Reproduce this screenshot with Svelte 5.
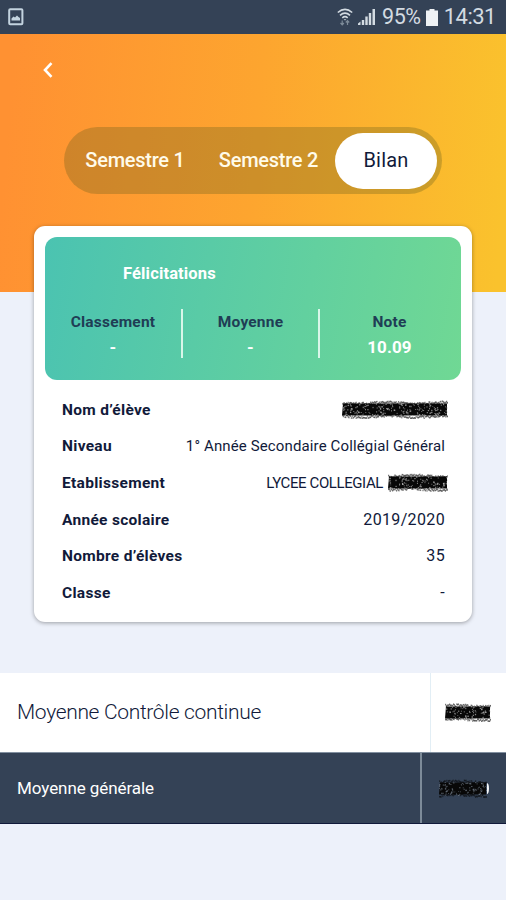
<script lang="ts">
  type Speck = { x: number; y: number; w: number; h: number; kind: string };

  interface Row {
    label: string;
    value: string;
    size: string;
    hidden?: number;
  }

  const tabs = ["Semestre 1", "Semestre 2", "Bilan"];
  let active = $state("Bilan");

  const stats = [
    { label: "Classement", value: "-" },
    { label: "Moyenne", value: "-" },
    { label: "Note", value: "10.09" },
  ];

  const rows: Row[] = [
    { label: "Nom d’élève", value: "", size: "", hidden: 106 },
    { label: "Niveau", value: "1° Année Secondaire Collégial Général", size: "long" },
    { label: "Etablissement", value: "LYCEE COLLEGIAL", size: "caps", hidden: 60 },
    { label: "Année scolaire", value: "2019/2020", size: "num" },
    { label: "Nombre d’élèves", value: "35", size: "num" },
    { label: "Classe", value: "-", size: "num" },
  ];

  // marker strokes: dark grain along the edges, light grain inside
  function grain(width: number, seed: number): Speck[] {
    let s = seed * 7919;
    const rnd = () => {
      s = (s * 16807) % 2147483647;
      return s / 2147483647;
    };
    const specks: Speck[] = [];
    for (let x = 0; x < width; x += 0.8) {
      const wave = Math.sin(x / 9 + seed) * 0.8;
      specks.push({ x, y: 1 + wave + rnd() * 2.5, w: 1.2, h: 1.6, kind: "edge" });
      specks.push({ x, y: 14.5 + wave + rnd() * 2.5, w: 1.2, h: 1.6, kind: "edge" });
    }
    for (let i = 0; i < width * 1.8; i++) {
      specks.push({
        x: rnd() * width,
        y: 3 + rnd() * 13,
        w: 0.7 + rnd() * 0.8,
        h: 0.7 + rnd() * 0.8,
        kind: "light",
      });
    }
    return specks;
  }
</script>

{#snippet scribble(width: number, seed: number, tone: string)}
  <svg class="scribble {tone}" {width} height="19" viewBox="0 0 {width} 19">
    <path d="M1 3.5H{width - 1}V15.5H0z" />
    {#each grain(width, seed) as g}
      <rect class={g.kind} x={g.x} y={g.y} width={g.w} height={g.h} />
    {/each}
  </svg>
{/snippet}

<div class="screen">
  <div class="status-bar">
    <svg class="picture" width="16" height="18" viewBox="0 0 16 18">
      <rect x="1.2" y="1.2" width="13.2" height="15" rx="1" fill="none" stroke="#c3d3df" stroke-width="2" />
      <path d="M3.5 12.5v-2l2-2 1.5 1 2-2 1.5 1.5 1.5 1v2.5z" fill="#c3d3df" />
    </svg>
    <div class="indicators">
      <svg width="16" height="18" viewBox="0 0 16 18" fill="none" stroke="#d3dbe2" stroke-width="1.6">
        <path d="M.8 4.5Q8-1.8 15.200 4.500M3 7.300Q8 3 13 7.300M5.300 9.800Q8 7.500 10.700 9.800" />
        <path d="M6.600 11.200h2.800L8 12.500z" fill="#d3dbe2" stroke="none" />
        <path d="M5.200 12.500v4M3.500 15l1.700 1.800L6.900 15M10.500 17v-4M8.800 14.500l1.700-1.800 1.700 1.800" stroke="#7e8c9a" stroke-width="1.2" />
      </svg>
      <svg class="signal" width="18" height="18" viewBox="0 0 18 18" fill="#d3dbe2">
        <path d="M0 17v-1.500l2.500-2V17zM3.800 17v-5h2.400v5zM7.300 17V8.500h2.400V17zM10.800 17V5h2.400v12zM14.500 17V1H17v16z" />
      </svg>
      <span class="percent">95%</span>
      <svg class="battery" width="12" height="17" viewBox="0 0 12 17" fill="#eef1f4">
        <path d="M3.500 0h5v1.500H12V17H0V1.500h3.500z" />
      </svg>
      <span class="clock">14:31</span>
    </div>
  </div>

  <header class="hero">
    <button class="back" aria-label="Retour">
      <svg width="10" height="16" viewBox="0 0 10 16" fill="none" stroke="#fff" stroke-width="2.6">
        <path d="M8.500 1.200 2 8l6.500 6.800" />
      </svg>
    </button>
    <nav class="tabs">
      {#each tabs as tab}
        <button class="tab" class:active={tab === active} onclick={() => (active = tab)}>{tab}</button>
      {/each}
    </nav>
  </header>

  <section class="card">
    <div class="summary">
      <h2>Félicitations</h2>
      <div class="stats">
        {#each stats as stat}
          <div class="stat">
            <span class="stat-label">{stat.label}</span>
            <span class="stat-value">{stat.value}</span>
          </div>
        {/each}
      </div>
    </div>
    <dl class="details">
      {#each rows as row, i}
        <div class="row">
          <dt>{row.label}</dt>
          <dd class={row.size} class:masked={row.hidden}>
            {#if row.value}<span>{row.value}</span>{/if}
            {#if row.hidden}{@render scribble(row.hidden, 31 + i * 17, "paper")}{/if}
          </dd>
        </div>
      {/each}
    </dl>
  </section>

  <section class="averages">
    <div class="average">
      <span class="average-label">Moyenne Contrôle continue</span>
      <span class="average-value">{@render scribble(46, 211, "paper")}</span>
    </div>
    <div class="average total">
      <span class="average-label">Moyenne générale</span>
      <span class="average-value">{@render scribble(48, 97, "dark")}<i class="digit-edge"></i></span>
    </div>
  </section>
</div>

<style>
  :global(body) {
    margin: 0;
    background: #edf1fa;
  }

  .screen {
    width: 506px;
    height: 900px;
    overflow: hidden;
    background: #edf1fa;
    color: #111a3a;
    font-family: Roboto, "Noto Sans", sans-serif;
  }

  .screen * {
    box-sizing: border-box;
  }

  button {
    border: 0;
    padding: 0;
    background: none;
    font: inherit;
  }

  .status-bar {
    display: flex;
    align-items: center;
    justify-content: space-between;
    height: 34px;
    padding: 0 10px 0 8px;
    background: #344256;
    color: #d3dbe2;
  }

  .indicators {
    display: flex;
    align-items: center;
    font-size: 22px;
    line-height: 36px;
  }

  .signal {
    margin-left: 5px;
  }

  .percent {
    margin-left: 6px;
    font-size: 21.5px;
    letter-spacing: -0.4px;
  }

  .battery {
    margin: 0 6px 0 5px;
  }

  .clock {
    letter-spacing: -0.5px;
  }

  .hero {
    height: 258px;
    padding: 28px 64px 0;
    background: linear-gradient(95deg, #ff9132 3%, #fda52f 50%, #fac22d 98%);
  }

  .back {
    display: block;
    width: 10px;
    height: 16px;
    margin-left: -21px;
  }

  .back svg {
    display: block;
  }

  .tabs {
    display: grid;
    grid-template-columns: 134px 133px 102px;
    align-items: center;
    width: 378px;
    height: 67px;
    margin-top: 49px;
    padding-left: 4px;
    border-radius: 34px;
    background: rgba(100, 95, 30, 0.31);
  }

  .tab {
    height: 56px;
    padding-bottom: 1px;
    border-radius: 28px;
    color: #fffbea;
    font-size: 20px;
    font-weight: 500;
    letter-spacing: -0.25px;
  }

  .tab.active {
    background: #fff;
    color: #111a3a;
    font-weight: 400;
    letter-spacing: 0.2px;
  }

  .card {
    width: 438px;
    height: 396px;
    margin: -66px 0 0 34px;
    padding: 11px;
    border-radius: 11px;
    background: #fff;
    box-shadow: 0 1px 4px rgba(0, 0, 0, 0.35);
    position: relative;
  }

  .summary {
    height: 143px;
    padding-top: 26px;
    border-radius: 12px;
    background: linear-gradient(100deg, #4bc3b1, #70d894);
  }

  h2 {
    margin: 0 0 0 78px;
    color: #fff;
    font-size: 16.5px;
    line-height: 22px;
    font-weight: 700;
    letter-spacing: 0.15px;
  }

  .stats {
    display: grid;
    grid-template-columns: 136px 137px 139px;
    margin-top: 24px;
  }

  .stat {
    display: flex;
    flex-direction: column;
    align-items: center;
    height: 49px;
    padding-top: 1px;
    line-height: 25px;
  }

  .stat + .stat {
    border-left: 2px solid #d9f6e9;
  }

  .stat:last-child {
    padding-left: 2px;
  }

  .stat-label {
    color: #203d55;
    font-size: 15.5px;
    font-weight: 700;
    letter-spacing: 0.2px;
  }

  .stat-value {
    color: #fff;
    font-size: 17px;
    font-weight: 700;
    letter-spacing: 0.1px;
  }

  .details {
    margin: 11.5px 16px 0 17px;
  }

  .row {
    display: flex;
    align-items: center;
    justify-content: space-between;
    height: 36.6px;
    font-size: 15.5px;
    line-height: 20px;
  }

  dt {
    font-weight: 700;
    letter-spacing: 0.3px;
  }

  dd {
    display: flex;
    align-items: center;
    gap: 5px;
    margin: 0;
  }

  .masked {
    margin-right: -3px;
  }

  .long {
    font-size: 15px;
    letter-spacing: 0.13px;
  }

  .caps {
    font-size: 15px;
    letter-spacing: -0.4px;
  }

  .num {
    font-size: 16px;
    letter-spacing: 0.35px;
  }

  .scribble {
    display: block;
    fill: #080808;
  }

  .scribble .edge {
    opacity: 0.55;
  }

  .scribble .light {
    fill: #bdbdbd;
    opacity: 0.7;
  }

  .scribble.dark .light {
    fill: #7c8794;
  }

  .averages {
    margin-top: 51px;
  }

  .average {
    display: flex;
    height: 79px;
    background: #fff;
    font-size: 21px;
    font-weight: 300;
    letter-spacing: -0.33px;
  }

  .average-label {
    flex: 1;
    align-self: center;
    padding: 0 0 2px 17px;
  }

  .average-value {
    display: flex;
    align-items: center;
    width: 76px;
    padding-left: 14px;
    border-left: 1px solid #e2eef5;
  }

  .total {
    height: 72px;
    border-top: 1px solid #8290a0;
    border-bottom: 1px solid #111a3a;
    background: #344256;
    color: #fff;
    font-size: 17px;
    font-weight: 400;
    letter-spacing: -0.07px;
  }

  .total .average-label {
    padding-bottom: 0;
  }

  .total .average-value {
    width: 86px;
    padding-left: 17px;
    border-left: 2px solid #7d8b99;
  }

  .digit-edge {
    width: 4px;
    height: 11px;
    margin-left: -2px;
    border-right: 2px solid #f4f6f8;
    border-radius: 50%;
  }
</style>
